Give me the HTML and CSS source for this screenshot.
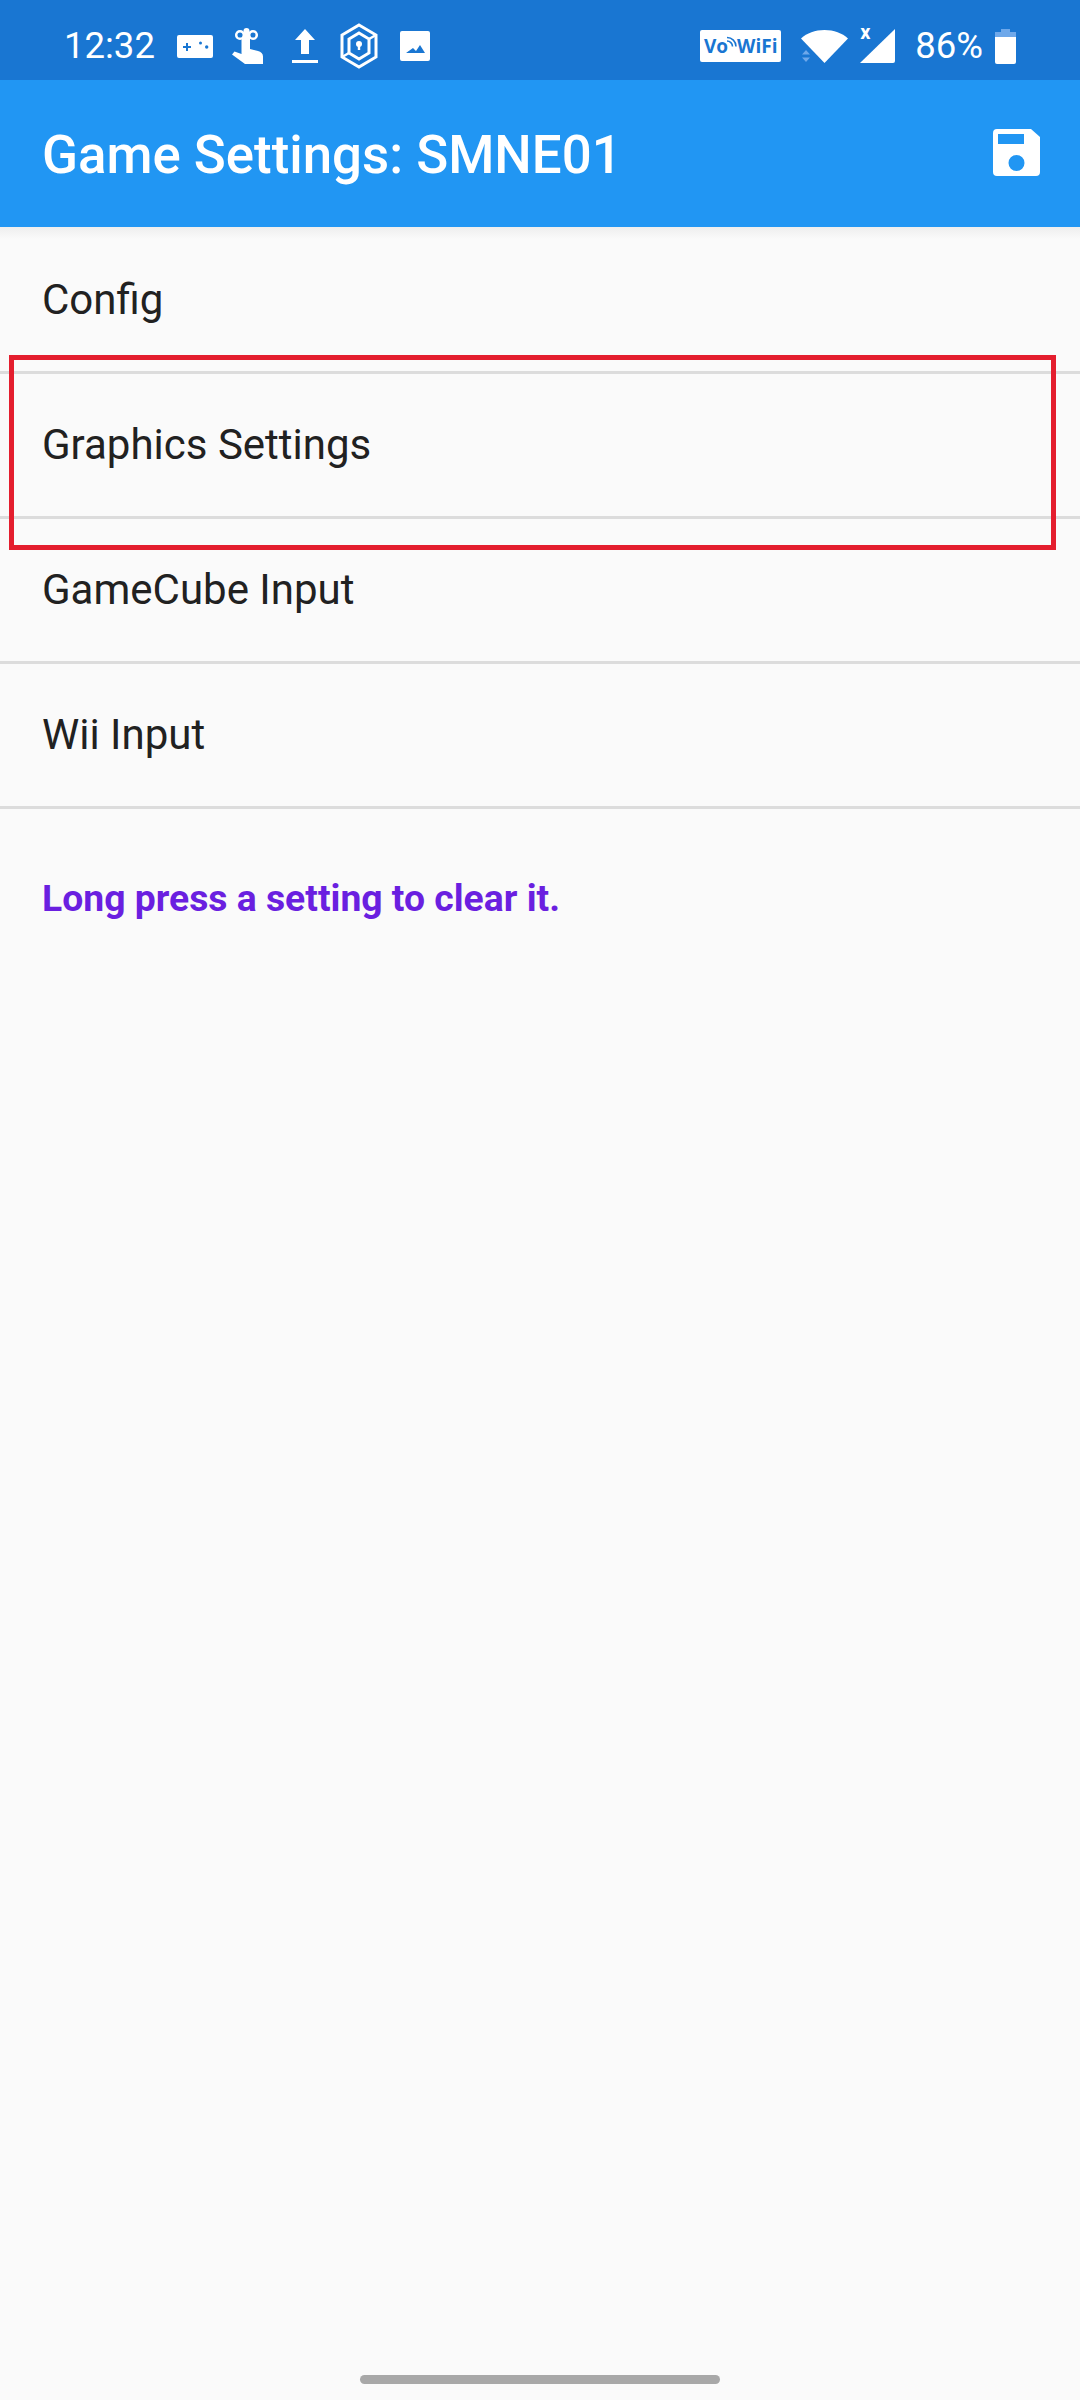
FILE: index.html
```html
<!DOCTYPE html>
<html lang="en">
<head>
<meta charset="utf-8">
<title>Game Settings</title>
<link rel="stylesheet" href="styles.css">
</head>
<body>
<div class="screen">
  <div class="status">
    <span class="time">12:32</span>
    <div class="notif">
      <svg class="ic-pad" viewBox="0 0 36 23"><path fill="#fff" fill-rule="evenodd" d="M2 0h32a2 2 0 0 1 2 2v19a2 2 0 0 1-2 2H2a2 2 0 0 1-2-2V2a2 2 0 0 1 2-2zM9 8v3H6v2h3v3h2v-3h3v-2h-3V8zM22 8a1.500 1.500 0 1 0 3 0a1.500 1.500 0 0 0-3 0zM28 12a1.700 1.700 0 1 0 3.400 0a1.700 1.700 0 0 0-3.400 0z"/></svg>
      <svg class="ic-touch" viewBox="0 0 32 36"><path fill="#fff" d="M11 10h7v11l8 2c3 .8 5 2.500 5 5.500V36H13L0 26.500l2.500-3 7 2.500V12c0-1 .5-2 1.500-2z"/><circle cx="8" cy="7" r="3.800" fill="none" stroke="#fff" stroke-width="2.500"/><circle cx="21" cy="7" r="3.800" fill="none" stroke="#fff" stroke-width="2.500"/><rect x="11.500" y="0" width="6" height="14" rx="3" fill="#fff"/></svg>
      <svg class="ic-up" viewBox="0 0 26 34"><path fill="#fff" d="M13 0l10 11h-6v14H9V11H3zM0 31h26v3H0z"/></svg>
      <svg class="ic-hex" viewBox="0 0 40 46"><path fill="none" stroke="#fff" stroke-width="3" d="M20 2l17 10v22L20 44 3 34V12z"/><path fill="none" stroke="#fff" stroke-width="3" d="M20 10l10 6v14l-10 6-10-6V16z"/><path fill="none" stroke="#fff" stroke-width="2.500" d="M30 16l7-4M10 30l-7 4"/><circle cx="20" cy="21" r="3" fill="#fff"/><rect x="18.800" y="21" width="2.400" height="6" fill="#fff"/></svg>
      <svg class="ic-img" viewBox="0 0 30 30"><path fill="#fff" fill-rule="evenodd" d="M2 0h26a2 2 0 0 1 2 2v26a2 2 0 0 1-2 2H2a2 2 0 0 1-2-2V2a2 2 0 0 1 2-2zM6 22h19l-5-8-4 6-3-3z"/></svg>
    </div>
    <div class="sys">
      <div class="vowifi"><span>Vo</span><svg class="vo-arc" viewBox="0 0 11 11"><path fill="none" stroke="#1976d2" stroke-width="1.600" d="M1 1.500a9 9 0 0 1 9 9M1 5a5.500 5.500 0 0 1 5.500 5.500"/></svg><span>WiFi</span></div>
      <div class="wifi-wrap">
        <svg class="ic-arrows" viewBox="0 0 10 12"><path fill="#6ea8ea" d="M5 0l4 4.500H1zM1 7.500h8L5 12z"/></svg>
        <svg class="ic-wifi" viewBox="0 0 47 33"><path fill="#fff" d="M23.500 33L0 8.500C6 3 14 0 23.500 0S41 3 47 8.500z"/></svg>
      </div>
      <div class="signal">
        <span class="x">x</span>
        <svg class="ic-sig" viewBox="0 0 35 34"><path fill="#fff" d="M35 0v32a2 2 0 0 1-2 2H0z"/></svg>
      </div>
      <span class="pct">86%</span>
      <svg class="ic-bat" viewBox="0 0 21 35"><path fill="#6ea8ea" d="M6 0h9v3h6v5H0V3h6z"/><path fill="#fff" d="M0 8h21v25a2 2 0 0 1-2 2H2a2 2 0 0 1-2-2z"/></svg>
    </div>
  </div>
  <header class="appbar">
    <h1 class="title">Game Settings: SMNE01</h1>
    <svg class="ic-save" viewBox="0 0 47 47"><path fill="#fff" fill-rule="evenodd" d="M4 0h34l9 8v35a4 4 0 0 1-4 4H4a4 4 0 0 1-4-4V4a4 4 0 0 1 4-4zM5 5v10h26V5zM23.500 26a8 8 0 1 0 0 16a8 8 0 0 0 0-16z"/></svg>
  </header>
  <ul class="list">
    <li class="row">Config</li>
    <li class="row">Graphics Settings</li>
    <li class="row">GameCube Input</li>
    <li class="row">Wii Input</li>
  </ul>
  <p class="hint">Long press a setting to clear it.</p>
  <div class="home"></div>
  <div class="highlight"></div>
</div>
</body>
</html>
```
FILE: styles.css
```css
* { box-sizing: border-box; }
html, body { margin: 0; padding: 0; }
body { font-family: Roboto, "Noto Sans", sans-serif; background: #fafafa; }
.screen { position: relative; width: 1080px; height: 2400px; background: #fafafa; overflow: hidden; display: flex; flex-direction: column; }

.status { height: 80px; flex: none; background: #1976d2; color: #fff; display: flex; align-items: center; padding: 12px 64px 0 64px; }
.time { font-size: 36.500px; line-height: 40px; }
.notif { display: flex; align-items: center; margin-left: 22px; }
.ic-pad { width: 36px; height: 23px; display: block; }
.ic-touch { width: 32px; height: 36px; display: block; margin-left: 19px; }
.ic-up { width: 26px; height: 34px; display: block; margin-left: 28px; }
.ic-hex { width: 40px; height: 46px; display: block; margin-left: 21px; }
.ic-img { width: 30px; height: 30px; display: block; margin-left: 21px; }

.sys { display: flex; align-items: center; margin-left: auto; }
.vowifi { width: 81px; height: 32px; background: #fff; border-radius: 2px; color: #1976d2; font: 700 19px/32px "Open Sans", sans-serif; display: flex; justify-content: center; align-items: center; margin-top: -1px; }
.vo-arc { width: 11px; height: 11px; margin: -9px 0 0 -2px; display: block; }
.wifi-wrap { position: relative; width: 47px; height: 33px; margin-left: 20px; }
.ic-wifi { width: 47px; height: 33px; display: block; }
.ic-arrows { position: absolute; left: 0; bottom: 1px; width: 10px; height: 12px; display: block; }
.signal { position: relative; width: 35px; height: 34px; margin-left: 12px; }
.ic-sig { width: 35px; height: 34px; display: block; }
.x { position: absolute; left: 0; top: -7px; font: 700 20px/20px Roboto, sans-serif; }
.pct { font-size: 36.500px; line-height: 40px; margin-left: 20px; }
.ic-bat { width: 21px; height: 35px; display: block; margin-left: 12px; }

.appbar { height: 147px; flex: none; background: #2196f3; display: flex; align-items: center; justify-content: space-between; padding: 0 40px 0 42px; position: relative; }
.title { margin: 2px 0 0; font-size: 52.800px; font-weight: 500; color: #fff; line-height: 60px; }
.ic-save { width: 47px; height: 47px; display: block; margin-bottom: 2px; }

.list { list-style: none; margin: 0; padding: 2px 0 0; background: linear-gradient(#eeeeee, #fafafa 12px) no-repeat; }
.row { height: 145px; border-bottom: 3px solid #dcdcdc; display: flex; align-items: center; padding: 0 42px 2px; font-size: 42px; color: #212121; }
.hint { margin: 65px 0 0; padding: 0 42px; font-size: 37.300px; font-weight: 700; line-height: 48px; color: #6a1fe0; }

.home { position: absolute; left: 360px; top: 2375px; width: 360px; height: 9px; border-radius: 5px; background: #a8a8a8; }
.highlight { position: absolute; left: 9px; top: 355px; width: 1047px; height: 195px; border: 5px solid #e41e2e; }
```
